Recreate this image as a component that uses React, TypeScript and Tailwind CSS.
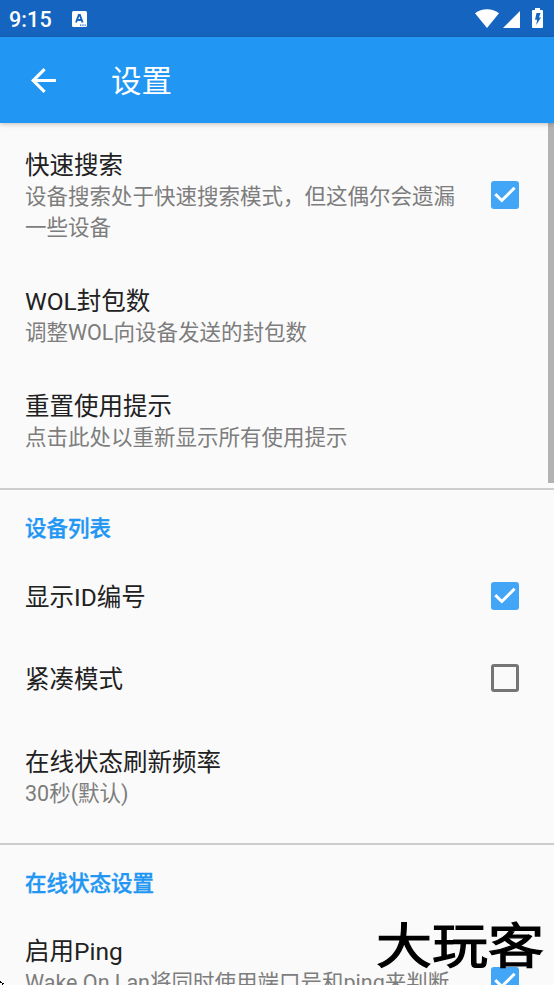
import type { ReactNode } from 'react';
import { clsx } from 'clsx';

interface PreferenceProps {
  title: string;
  summary?: ReactNode;
  checked?: boolean;
  className?: string;
}

function StatusBar() {
  return (
    <div className="flex h-[37px] shrink-0 items-center bg-[#1565c0] pl-[9px] pr-[11px] text-white">
      <span className="pt-0.5 text-[21.5px] font-medium leading-[37px] tracking-[0.1px]">9:15</span>
      <svg className="ml-5 h-4 w-[15px]" viewBox="0 0 15 16">
        <rect width="15" height="16" rx="1.5" fill="#fff" />
        <path
          d="M4 11.5 6.8 4h1.1l2.7 7.5M5.2 9h4.2"
          fill="none"
          stroke="#1565c0"
          strokeWidth="1.9"
        />
        <path d="M8 13.5h1.3v1.2H8zM10.3 13.5h1.3v1.2h-1.3zM12.6 13.5h1.2v1.2h-1.2z" fill="#1565c0" />
      </svg>
      <div className="ml-auto flex items-end pb-px">
        <svg className="h-[19px] w-6" viewBox="0 0 24 19" fill="#fff">
          <path d="M12 19 0 4.2C3.5 1.5 7.5.2 12 .2s8.5 1.3 12 4z" />
        </svg>
        <svg className="ml-1 h-[17px] w-[17px]" viewBox="0 0 17 17" fill="#fff">
          <path d="M17 0v17H0z" />
        </svg>
        <svg className="ml-3 h-5 w-[11px]" viewBox="0 0 11 20">
          <path
            d="M3 0h5v2h2a1 1 0 0 1 1 1v16a1 1 0 0 1-1 1H1a1 1 0 0 1-1-1V3a1 1 0 0 1 1-1h2z"
            fill="#fff"
          />
          <path d="M4.5 5h4L7 9.5h2L4.2 17l.9-5.2H3z" fill="#1565c0" />
        </svg>
      </div>
    </div>
  );
}

function AppBar() {
  return (
    <header className="z-10 flex h-[86px] shrink-0 items-center bg-[#2196f3] pl-[30.5px] text-white shadow-[0_1px_5px_rgba(0,0,0,0.25)]">
      <svg className="h-[25px] w-[25px]" viewBox="4 4 16 16" fill="#fff">
        <path d="M20 11H7.83l5.59-5.59L12 4l-8 8 8 8 1.41-1.41L7.83 13H20z" />
      </svg>
      <h1 className="ml-[55.5px] pt-1 text-[30.5px] leading-[40px]">设置</h1>
    </header>
  );
}

function Checkbox({ checked }: { checked: boolean }) {
  return (
    <span
      className={clsx(
        'mr-[35px] flex h-7 w-7 shrink-0 items-center justify-center rounded-[3px]',
        checked ? 'bg-[#42a5f5]' : 'border-[3px] border-[#757575]'
      )}
    >
      {checked && (
        <svg className="h-7 w-7" viewBox="0 0 28 28" fill="none">
          <path d="m4.3 13.2 6.5 6.3L23.6 6.7" stroke="#fff" strokeWidth="3" />
        </svg>
      )}
    </span>
  );
}

function Preference({ title, summary, checked, className }: PreferenceProps) {
  return (
    <div className={clsx('flex min-h-[82.5px] shrink-0 items-center pl-[25px]', className)}>
      <div className="w-[440px] py-[21.5px]">
        <div className="text-[24.5px] leading-[31px] text-[#212121]">{title}</div>
        {summary && (
          <div className="whitespace-nowrap text-[21.5px] leading-[31.5px] text-[#7d7d7d]">
            {summary}
          </div>
        )}
      </div>
      {checked !== undefined && (
        <div className={clsx('ml-auto', summary ? 'pb-1' : 'pb-[3px]')}>
          <Checkbox checked={checked} />
        </div>
      )}
    </div>
  );
}

function Category({ title }: { title: string }) {
  return (
    <h2 className="h-[68px] shrink-0 border-t-2 border-[#cdcdcd] pl-[25px] pt-[23px] text-[21.5px] font-medium leading-[32px] text-[#2196f3] [-webkit-text-stroke:0.35px_#2196f3]">
      {title}
    </h2>
  );
}

export default function App() {
  return (
    <div
      lang="zh-CN"
      className="relative flex h-[985px] w-[554px] flex-col overflow-hidden bg-[#fafafa] font-[Roboto,'Noto_Sans_CJK_SC',sans-serif]"
    >
      <StatusBar />
      <AppBar />
      <main className="flex min-h-0 flex-1 flex-col overflow-hidden pt-[5px]">
        <Preference
          title="快速搜索"
          summary={
            <>
              设备搜索处于快速搜索模式，但这偶尔会遗漏
              <br />
              一些设备
            </>
          }
          checked
        />
        <Preference title="WOL封包数" summary="调整WOL向设备发送的封包数" className="-mt-px" />
        <Preference
          title="重置使用提示"
          summary="点击此处以重新显示所有使用提示"
          className="mb-[13px]"
        />
        <Category title="设备列表" />
        <Preference title="显示ID编号" checked />
        <Preference title="紧凑模式" checked={false} />
        <Preference title="在线状态刷新频率" summary="30秒(默认)" className="mb-[12.5px] mt-1" />
        <Category title="在线状态设置" />
        <Preference
          title="启用Ping"
          summary={
            <>
              Wake On Lan将同时使用端口号和ping来判断
              <br />
              <br />
            </>
          }
          checked
          className="mt-[3px]"
        />
      </main>

      {/* scroll thumb */}
      <div className="absolute right-0 top-[123px] h-[360px] w-1.5 bg-[#b2b2b2]" />

      {/* watermark */}
      <div className="absolute left-[376px] top-[921px] origin-top-left scale-y-[0.86] whitespace-nowrap text-[56px] font-normal leading-[60px] text-black [-webkit-text-stroke:1.4px_black]">
        大玩客
      </div>

      {/* pointer edge */}
      <svg className="absolute bottom-0 left-0 h-[5px] w-[5px]" viewBox="0 0 5 5">
        <path d="M0 1h1v1h1v1h-2zM2 3h2v1H3v1H2z" fill="#000" />
      </svg>
    </div>
  );
}
